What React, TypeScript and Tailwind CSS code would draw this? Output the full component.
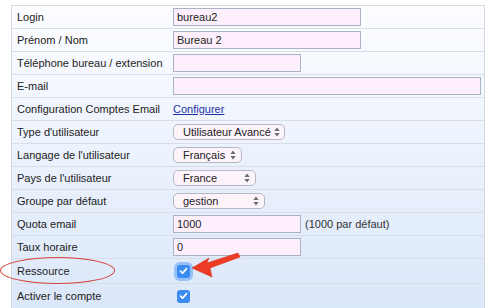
const font = { fontFamily: '"Liberation Sans", Arial, sans-serif' }

function TextInput({ value = '', w }: { value?: string; w: string }) {
    return (
        <div className={`${w} h-[18px] border border-[#a9b3c6] bg-[#fdf0fc] pl-[3px] text-[11px] leading-[16px] text-[#222]`}>
            {value}
        </div>
    )
}

function Arrows() {
    return (
        <svg width="6" height="10" viewBox="0 0 6 10" className="shrink-0">
            <path d="M3 0.5 L5.6 4 L0.4 4 Z" fill="#6b6b6b" />
            <path d="M3 9.5 L5.6 6 L0.4 6 Z" fill="#6b6b6b" />
        </svg>
    )
}

function Select({ value, w }: { value: string; w: string }) {
    return (
        <div className={`${w} h-[16px] rounded-[5px] border border-[#b5b8c2] bg-[#fdf3fb] pl-[9px] pr-[5px] flex items-center justify-between gap-[3px] text-[11px] text-[#222]`}>
            <span className="whitespace-nowrap">{value}</span>
            <Arrows />
        </div>
    )
}

function Check({ focus }: { focus?: boolean }) {
    return (
        <div className={`ml-[4px] w-[13px] h-[13px] rounded-[3px] bg-[#3b8cf2] flex items-center justify-center ${focus ? 'shadow-[0_0_0_3px_#97c2f7]' : ''}`}>
            <svg width="9" height="8" viewBox="0 0 9 8">
                <path d="M1.5 4.2 L3.6 6.2 L7.5 1.6" stroke="white" strokeWidth="1.7" fill="none" strokeLinecap="round" strokeLinejoin="round" />
            </svg>
        </div>
    )
}

const rows: { label: string; h?: string; field: React.ReactNode }[] = [
    { label: 'Login', field: <TextInput value="bureau2" w="w-[188px]" /> },
    { label: 'Prénom / Nom', field: <TextInput value="Bureau 2" w="w-[188px]" /> },
    { label: 'Téléphone bureau / extension', field: <TextInput w="w-[128px]" /> },
    { label: 'E-mail', field: <TextInput w="w-[308px]" /> },
    { label: 'Configuration Comptes Email', field: <a className="text-[#1d2fa3] underline text-[11px]">Configurer</a> },
    { label: "Type d'utilisateur", field: <Select value="Utilisateur Avancé" w="w-[112px]" /> },
    { label: "Langage de l'utilisateur", field: <Select value="Français" w="w-[69px]" /> },
    { label: "Pays de l'utilisateur", field: <Select value="France" w="w-[83px]" /> },
    { label: 'Groupe par défaut', field: <Select value="gestion" w="w-[92px]" /> },
    {
        label: 'Quota email',
        field: (
            <div className="flex items-center gap-[4px]">
                <TextInput value="1000" w="w-[128px]" />
                <span className="text-[11px] text-[#333]">(1000 par défaut)</span>
            </div>
        ),
    },
    { label: 'Taux horaire', field: <TextInput value="0" w="w-[128px]" /> },
    { label: 'Ressource', h: 'h-[25px]', field: <Check focus /> },
    { label: 'Activer le compte', h: 'h-[25px]', field: <Check /> },
]

export default function App() {
    return (
        <div className="relative w-[494px] h-[308px] overflow-hidden bg-white" style={font}>
            <div className="ml-[11px] mt-[5px] w-[474px] border-t border-x border-[#d5d9df] bg-gradient-to-b from-[#fcfdff] to-[#dbe7fa]">
                {rows.map((r) => (
                    <div key={r.label} className={`flex items-center border-b border-[#d9dee6] ${r.h ?? 'h-[23px]'}`}>
                        <div className="w-[161px] shrink-0 pl-[5px] text-[11px] text-[#222] whitespace-nowrap">{r.label}</div>
                        <div className="flex items-center">{r.field}</div>
                    </div>
                ))}
            </div>

            {/* annotation: ellipse + arrow */}
            <div className="absolute left-[0px] top-[257px] w-[115px] h-[27px] rounded-[50%] border border-[#d2453b]" />
            <svg className="absolute left-[185px] top-[246px]" width="60" height="36" viewBox="0 0 60 36">
                <polygon
                    points="7,22 24,12 22,17 53,7 55,11 25,22 27,31"
                    fill="#ee3b25"
                    stroke="#d8321e"
                    strokeWidth="0.6"
                    strokeLinejoin="round"
                />
            </svg>
        </div>
    )
}
